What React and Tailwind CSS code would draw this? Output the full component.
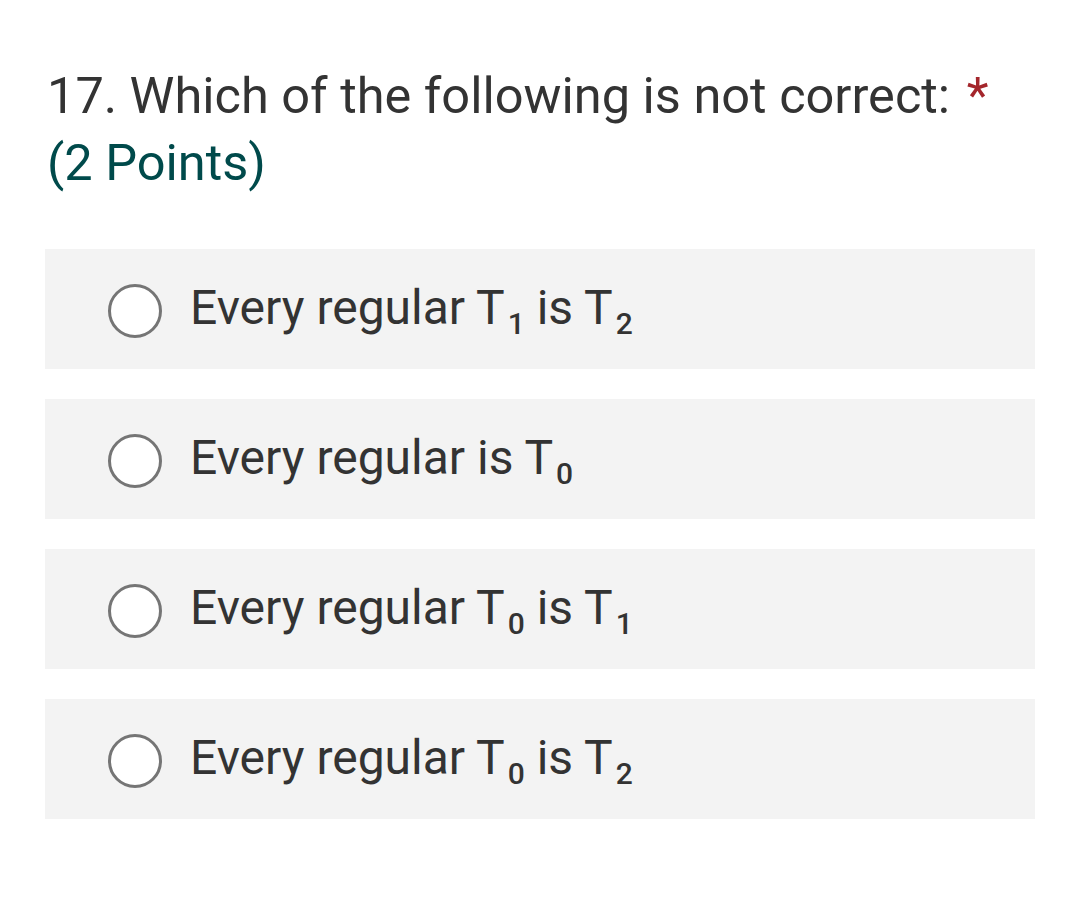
import React from "react";

const options = [
  { id: 1, parts: ["Every regular T", "1", " is T", "2"] },
  { id: 2, parts: ["Every regular is T", "0"] },
  { id: 3, parts: ["Every regular T", "0", " is T", "1"] },
  { id: 4, parts: ["Every regular T", "0", " is T", "2"] },
];

function Option({ parts }) {
  return (
    <div className="h-[120px] bg-[#f3f3f3] flex items-center pl-[63px] pt-[4px]">
      <span className="w-[54px] h-[54px] rounded-full border-[3px] border-[#757575] bg-white shrink-0" />
      <span className="ml-[28px] text-[48px] text-[#333333] leading-none">
        {parts.map((p, i) =>
          i % 2 === 1 ? (
            <span key={i} className="text-[30px] font-medium align-[-10px] ml-[3px]">
              {p}
            </span>
          ) : (
            <span key={i}>{p}</span>
          )
        )}
      </span>
    </div>
  );
}

export default function App() {
  return (
    <div className="w-[1080px] h-[910px] bg-white pt-[62px] px-[45px]" style={{ fontFamily: "Roboto, sans-serif" }}>
      <h1 className="text-[50.5px] leading-[67px] text-[#333333] pl-[2px]">
        17. Which of the following is not correct:{" "}
        <span className="text-[#a4262c] ml-[4px]">*</span>
        <br />
        <span className="text-[#004a4b]">(2 Points)</span>
      </h1>
      <div className="mt-[53px] flex flex-col gap-[30px] w-[990px]">
        {options.map((o) => (
          <Option key={o.id} parts={o.parts} />
        ))}
      </div>
    </div>
  );
}
